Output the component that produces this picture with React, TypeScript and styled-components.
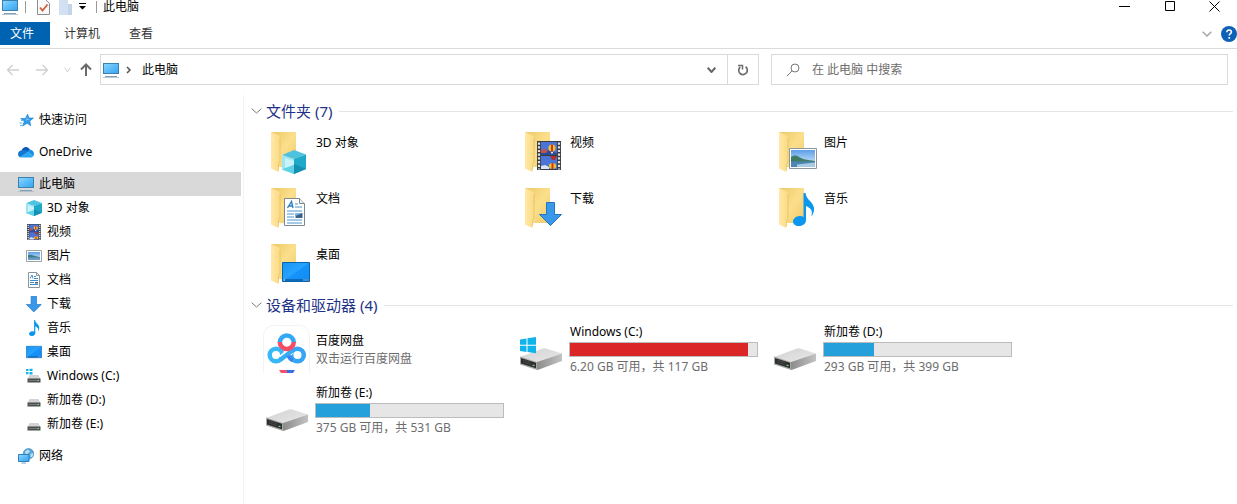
import React from "react";
import styled, { createGlobalStyle } from "styled-components";

const GlobalStyle = createGlobalStyle`
  * { box-sizing: border-box; }
  body {
    margin: 0;
    background: #fff;
    color: #000;
    font: 12px/18px "Noto Sans", "Noto Sans CJK SC", sans-serif;
  }
  button, input { font: inherit; color: inherit; border: 0; background: none; padding: 0; margin: 0; }
  svg { display: block; flex: none; }
`;

const Window = styled.div`
  display: flex;
  flex-direction: column;
  min-height: 100vh;
`;

/* ---------- title bar ---------- */
const TitleBar = styled.header`
  display: flex;
  align-items: center;
  height: 22px;
  padding: 0 0 9px 2px;
`;
const QuickTools = styled.div`
  display: flex;
  align-items: center;
`;
const ToolButton = styled.button<{ $w: number }>`
  display: flex;
  justify-content: center;
  width: ${(p) => p.$w}px;
`;
const Separator = styled.span`
  width: 1px;
  height: 12px;
  margin: 0 6px 0 7px;
  background: #9a9a9a;
`;
const Title = styled.h1`
  flex: 1;
  margin: 0;
  font-size: 12px;
  line-height: 13px;
  font-weight: 400;
`;
const WindowButton = styled.button`
  display: flex;
  justify-content: center;
  width: 45px;
`;

/* ---------- ribbon ---------- */
const Ribbon = styled.nav`
  display: flex;
  align-items: center;
  height: 27px;
  padding-bottom: 3px;
  border-bottom: 1px solid #dadbdc;
`;
const Tab = styled.button<{ $active?: boolean }>`
  height: 23px;
  padding: 0 15px 0 14px;
  ${(p) => (p.$active ? "background: #0063b1; color: #fff; padding: 0 16px 0 10px;" : "color: #333;")}
`;
const RibbonEnd = styled.div`
  display: flex;
  align-items: center;
  gap: 9px;
  margin-left: auto;
`;

/* ---------- address row ---------- */
const AddressRow = styled.div`
  display: flex;
  align-items: center;
  padding: 5px 9px 0 0;
`;
const History = styled.div`
  display: flex;
  align-items: center;
  flex: none;
  width: 100px;
  padding-left: 5px;
`;
const AddressBox = styled.div`
  display: flex;
  align-items: center;
  flex: 659 1 659px;
  min-width: 0;
  height: 31px;
  border: 1px solid #d9d9d9;
  padding-left: 2px;
`;
const Crumb = styled.button`
  padding: 0 3px 0 7px;
`;
const AddressEnd = styled.div`
  display: flex;
  align-self: stretch;
  margin-left: auto;
`;
const AddressButton = styled.button<{ $line?: boolean }>`
  display: flex;
  align-items: center;
  justify-content: center;
  width: 31px;
  ${(p) => p.$line && "border-left: 1px solid #d9d9d9;"}
`;
const SearchBox = styled.label`
  display: flex;
  align-items: center;
  gap: 12px;
  flex: 457 1 457px;
  min-width: 0;
  height: 31px;
  margin-left: 12px;
  padding-left: 14px;
  border: 1px solid #d9d9d9;
`;
const SearchInput = styled.input`
  flex: 1;
  min-width: 0;
  outline: 0;
  &::placeholder { color: #6d6d6d; opacity: 1; }
`;

/* ---------- body ---------- */
const Body = styled.div`
  display: flex;
  flex: 1;
  padding-top: 10px;
`;
const Sidebar = styled.nav`
  display: flex;
  flex-direction: column;
  gap: 8px;
  width: 244px;
  flex: none;
  padding: 13px 2px 0 0;
  border-right: 1px solid #f3f3f3;
`;
const NavGroup = styled.ul`
  margin: 0;
  padding: 0;
  list-style: none;
`;
const NavLink = styled.a<{ $child?: boolean; $selected?: boolean }>`
  display: flex;
  align-items: center;
  gap: 5px;
  height: 24px;
  padding-left: ${(p) => (p.$child ? 26 : 18)}px;
  color: #000;
  text-decoration: none;
  background: ${(p) => (p.$selected ? "#d9d9d9" : "none")};
`;
const Content = styled.main`
  flex: 1;
  min-width: 0;
  padding: 3px 4px 0 7px;
`;
const SectionHeader = styled.h2`
  display: flex;
  align-items: center;
  gap: 4px;
  height: 26px;
  margin: 0;
  font-size: 15px;
  font-weight: 400;
  color: #1e3287;
  &::after {
    content: "";
    flex: 1;
    height: 1px;
    margin-left: 3px;
    background: #e4e4e4;
  }
`;
const Tiles = styled.div<{ $row: number }>`
  display: grid;
  grid-template-columns: repeat(auto-fill, 254px);
  grid-auto-rows: ${(p) => p.$row}px;
  padding-left: 12px;
`;
const FolderTile = styled.a`
  display: flex;
  gap: 5px;
  padding: 5px 0 3px;
  color: inherit;
  text-decoration: none;
`;
const FolderName = styled.span`
  padding-top: 5px;
`;
const DriveTile = styled.a`
  display: flex;
  align-items: center;
  gap: 4px;
  color: inherit;
  text-decoration: none;
`;
const DriveInfo = styled.span`
  display: flex;
  flex-direction: column;
  padding-top: 2px;
`;
const Line = styled.span<{ $muted?: boolean }>`
  padding-left: 1px;
  color: ${(p) => (p.$muted ? "#6d6d6d" : "#000")};
`;
const Usage = styled.progress<{ $full?: boolean }>`
  appearance: none;
  display: block;
  width: 189px;
  height: 15px;
  margin: 1px 0;
  border: 1px solid #bcbcbc;
  background: #e6e6e6;
  &::-webkit-progress-bar { background: #e6e6e6; }
  &::-webkit-progress-value { background: ${(p) => (p.$full ? "#da2626" : "#26a0da")}; }
`;

/* ---------- icons ---------- */
const Gradients = styled.svg`
  position: absolute;
`;
const Defs = () => (
  <Gradients width="0" height="0" aria-hidden="true">
    <defs>
      <linearGradient id="screen" x1="0" y1="0" x2="1" y2="1">
        <stop offset="0" stopColor="#8fd8ff" /><stop offset=".5" stopColor="#5bbcfa" /><stop offset="1" stopColor="#3aa3ee" />
      </linearGradient>
      <linearGradient id="back" x1="0" y1="0" x2="1" y2="1">
        <stop offset="0" stopColor="#edc865" /><stop offset=".5" stopColor="#fbdf8c" /><stop offset="1" stopColor="#f0cb69" />
      </linearGradient>
      <linearGradient id="flap" x1="0" y1="0" x2="1" y2="0">
        <stop offset="0" stopColor="#ffe9a6" /><stop offset="1" stopColor="#fbdb84" />
      </linearGradient>
      <linearGradient id="desk" x1="0" y1="0" x2="1" y2="1">
        <stop offset="0" stopColor="#1595f5" /><stop offset=".48" stopColor="#27a3ff" /><stop offset=".52" stopColor="#1593f8" /><stop offset="1" stopColor="#0f8df2" />
      </linearGradient>
      <linearGradient id="sky" x1="0" y1="0" x2="0" y2="1">
        <stop offset="0" stopColor="#5b9fe8" /><stop offset="1" stopColor="#e4f3fc" />
      </linearGradient>
      <linearGradient id="metal" x1="0" y1="0" x2="1" y2="1">
        <stop offset="0" stopColor="#d2d2d2" /><stop offset="1" stopColor="#e8e8e8" />
      </linearGradient>
      <linearGradient id="side" x1="0" y1="0" x2="1" y2="0">
        <stop offset="0" stopColor="#8c8c8c" /><stop offset="1" stopColor="#c2c2c2" />
      </linearGradient>
    </defs>
  </Gradients>
);

const Small = ({ children }: { children: React.ReactNode }) => (
  <svg width="16" height="16" viewBox="0 0 16 16" fill="none" aria-hidden="true">{children}</svg>
);

const PcIcon = () => (
  <Small>
    <rect x=".5" y="1.5" width="15" height="10" fill="url(#screen)" stroke="#3c80b0" />
    <path d="M2 14.5h12" stroke="#7fa0b8" /><path d="M0 15.5h16" stroke="#a9bac7" strokeWidth=".8" />
  </Small>
);
const StarIcon = () => (
  <Small>
    <path d="M9.600 2.200l1.400 3.800 4.500.1-3.700 2.800.9 4.900-3.500-2.500-4.600 2.800 1.700-4.600L2.600 6.500h4.700z" fill="#2f9be9" stroke="#1a7fcd" strokeWidth=".6" />
    <path d="M9 5l.8 2 2.200.3-4 1.500z" fill="#7cc9fb" />
    <path d="M3 8.500h2.500M1.500 11h3M2 13.500h2" stroke="#5db4f0" />
  </Small>
);
const CloudIcon = () => (
  <Small>
    <path d="M3.500 6.500C4.500 3.800 7 2.500 9.200 3.200c1.400.4 2.300 1.300 2.800 2.500L8 9z" fill="#0a5cb8" />
    <path d="M3.700 6.200C1.500 6.400 0 8 0 10c0 1.500.8 2.700 2 3.200L10.500 8 8 6.500c-1.200-.6-2.800-.7-4.300-.3z" fill="#1277d2" />
    <path d="M9.500 7.700c.7-1.300 1.500-2 2.700-2 2 0 3.800 1.800 3.800 4 0 1-.3 1.800-.8 2.500z" fill="#1b8fe4" />
    <path d="M2 13.200l7.500-5.500 5.700 4.500c-.6.8-1.500 1.300-2.500 1.300H3.500c-.5 0-1-.1-1.500-.3z" fill="#2aa5f0" />
  </Small>
);
const CubeShape = () => (
  <>
    <path d="M12 0L24 4.500 12 9 0 5z" fill="#4fc3dd" /><path d="M0 5l12 4v15L0 19.500z" fill="#9be6f2" />
    <path d="M24 4.500L12 9v15l12-5z" fill="#1fa9c9" /><path d="M0 19.500L12 14v10z" fill="#5fd2e6" /><path d="M12 14l12 5-12 5z" fill="#158fb2" />
    <path d="M3 8l9 3v4l-9 3z" fill="#e0fafd" opacity=".65" />
  </>
);
const CubeIcon = () => <Small><g transform="scale(.667)"><CubeShape /></g></Small>;
const FilmShape = () => (
  <>
    <path d="M0 0h24v29H0z" fill="#3a3c3f" />
    <path d="M4 1h16v13H4zM4 15h16v13H4z" fill="#4a74d8" />
    <path d="M4 10l6-1 10 3v2H4z" fill="#27499e" /><path d="M4 9l4-1 3 2-2 2H4z" fill="#c1544a" />
    <ellipse cx="15" cy="7" rx="3.600" ry="3.500" fill="#f1c02b" /><path d="M14 3.500h2v7h-2z" fill="#c93a26" /><path d="M14 11h2v1.500h-2z" fill="#f7e3a8" />
    <path d="M13 15h7l-2 4h-3z" fill="#a83434" /><ellipse cx="15.500" cy="25" rx="3.600" ry="3" fill="#f1c02b" /><path d="M14.500 22h2v6h-2z" fill="#c93a26" />
    <path d="M4 25l4-1 4 2v2H4z" fill="#d8e3f5" />
    <path d="M2 1.500v27M22 1.500v27" stroke="#e4e4e4" strokeWidth="2.200" strokeDasharray="2.200 1.500" />
  </>
);
const FilmIcon = () => <Small><g transform="translate(1 0) scale(.58 .55)"><FilmShape /></g></Small>;
const PhotoShape = () => (
  <>
    <path d="M.5.5h27v20H.5z" fill="#fff" stroke="#8e969c" /><path d="M2 2h24v17H2z" fill="url(#sky)" />
    <path d="M2 9c3-2 5-2 8 0s8 3 16 4v1H2z" fill="#3f7c66" /><path d="M2 13.500h24V19H2z" fill="#4d86b4" /><path d="M8 16.500l18-2V19H8z" fill="#a8cae2" />
  </>
);
const PhotoIcon = () => (
  <Small>
    <path d="M.5 2.500h15v11H.5z" fill="#fff" stroke="#9aa3a9" /><path d="M2 4h12v8H2z" fill="url(#sky)" />
    <path d="M2 7c3-1 5 1 12 2v1H2z" fill="#3f7c86" /><path d="M2 9.500h12V12H2z" fill="#6b9cc6" />
  </Small>
);
const DocShape = () => (
  <>
    <path d="M.5.5h15l5 5v22H.5z" fill="#fff" stroke="#7c8890" /><path d="M15.500.5v5h5" fill="#e8edf0" stroke="#7c8890" />
    <path d="M3.500 10L7.500 3.500l1.500 6.500M5 8h4" stroke="#2f7fc0" strokeWidth="1.400" />
    <path d="M11 6h3M11 9h7M3 13h15M3 16h7M3 19h7M3 22h15M3 25h15" stroke="#4b94cf" />
    <path d="M11.500 15h7v5h-7z" fill="#3a628c" /><path d="M11.500 15h7l-7 3z" fill="#82b4dc" />
  </>
);
const DocIcon = () => (
  <Small>
    <path d="M2.500.5h8l3 3v12h-11z" fill="#fff" stroke="#8a959c" /><path d="M10.500.5v3h3" stroke="#8a959c" />
    <path d="M4 6.500L6 3l1 3.500M8 4.500h2M8 6.500h4M4 8.500h8M4 10.500h4M4 12.500h8" stroke="#3f8fce" /><path d="M9 10h3v1.500H9z" fill="#3a628c" />
  </Small>
);
const ArrowShape = () => <path d="M7.500.5h8v12h7L11.500 23.500.5 12.500h7z" fill="#3a98ea" stroke="#2377bd" />;
const ArrowIcon = () => <Small><g transform="scale(.68)"><ArrowShape /></g></Small>;
const NoteShape = () => (
  <path d="M10.500 0h2c.5 4 2.500 6 5 8.500 3.500 4 5 7.500 2 13.500l-1.200 1.500c1.500-5 .5-8-5.300-10.500v14c0 3.500-3 6-7 6S0 31 0 28.500 3 23 6.500 23c1.500 0 3 .3 4 1z" fill="#0c97ee" />
);
const NoteIcon = () => <Small><g transform="translate(3) scale(.485)"><NoteShape /></g></Small>;
const DesktopShape = () => (
  <>
    <path d="M.5.5h27v19H.5z" fill="url(#desk)" stroke="#0a63ad" /><path d="M1 18h26" stroke="#0b5ea8" strokeWidth="1.500" />
    <path d="M1.500 18h1.500M21.500 18h1M23.500 18h1M25.500 18h1" stroke="#fff" />
  </>
);
const DesktopIcon = () => <Small><g transform="translate(0 2) scale(.571 .6)"><DesktopShape /></g></Small>;
const DriveIcon = ({ win }: { win?: boolean }) => (
  <Small>
    <path d="M3.500 7h9l2 4H1.500z" fill="#d3d3d3" /><path d="M1.500 10.500h13v4h-13z" fill="#4b4d4e" />
    <path d="M2.500 12.500h9" stroke="#727576" /><path d="M11.500 12.500h1.500" stroke="#80e090" />
    {win && <path d="M0 0h7v7H0z" fill="#fff" />}
    {win && <path d="M0 1h2.500v2H0zM3.500.8h3V3h-3zM0 4h2.500v2.200H0zM3.500 4h3v2.500h-3z" fill="#13b5ea" />}
  </Small>
);
const NetworkIcon = () => (
  <Small>
    <circle cx="10.500" cy="5.800" r="5.300" fill="#58a7d8" stroke="#3c83b4" strokeWidth=".6" />
    <path d="M7 3.500l3-2 2 2-2 2-2.500 1zM12.500 6l2-1 .8 2-1.500 2.500-1.500-1z" fill="#b7dfee" />
    <path d="M.5 6.500h10.500v7H.5z" fill="url(#screen)" stroke="#2f7fc0" /><path d="M3.500 15h4.500" stroke="#7fa0b8" />
  </Small>
);

const Large = ({ children }: { children: React.ReactNode }) => (
  <svg width="48" height="48" viewBox="0 0 48 48" fill="none" aria-hidden="true">{children}</svg>
);
const Folder = ({ x, y, children }: { x: number; y: number; children: React.ReactNode }) => (
  <Large>
    <path d="M8 3h25v35H16z" fill="url(#back)" />
    <path d="M8 3l8 3.500c.7.300 1 .8 1 1.500v24l-1.500 2v9L8 39.500z" fill="url(#flap)" />
    <path d="M17 9v24l-1.500 2v6" stroke="#e3bd61" strokeWidth=".7" />
    <g transform={`translate(${x} ${y})`}>{children}</g>
  </Large>
);
const DriveLarge = ({ win }: { win?: boolean }) => (
  <Large>
    <path d="M3 32L26 23.500q1.500-.5 3 0l16 5-25 8.500z" fill="url(#metal)" />
    <path d="M20 37L45 28.500V36L22 44.500l-2 .5z" fill="url(#side)" />
    <path d="M3 31.500L20 37v8L3 39.500z" fill="#a9a9a9" /><path d="M4 33l15 4.700v5.600L4 38.500z" fill="#2c2f2e" />
    <path d="M6 35l8 2.500M6 37l8 2.500" stroke="#4d5250" strokeWidth=".7" /><path d="M15.500 40l2 .7" stroke="#7ae083" strokeWidth="1.200" />
    {win && <path d="M3 14.500l6.500-1v6.200H3zM10.500 13.300L19 12v7.700h-8.500zM3 20.700h6.500v6.200l-6.500-1zM10.500 20.700H19v7.600l-8.500-1.200z" fill="#10b4ea" />}
  </Large>
);
const BaiduIcon = () => (
  <Large>
    <path d="M.5 48V10.500a10 10 0 0 1 10-10h26a10 10 0 0 1 10 10V48" fill="#fff" stroke="#f3f3f5" />
    <g strokeWidth="4.500">
      <circle cx="13" cy="30" r="6.300" stroke="#38b8f6" />
      <circle cx="34.500" cy="30" r="6.300" stroke="#35a5f5" />
      <path d="M18.500 33.500L28.500 25.500" stroke="#fff" strokeWidth="7" />
      <path d="M17 35L29.500 25.500" stroke="#36aef5" />
      <path d="M25.500 30.500q1 3.500 4.500 5" stroke="#3a86f0" strokeWidth="4" />
      <path d="M16.800 17.500a7 7 0 0 1 14 0" stroke="#32a9f3" />
      <path d="M16.800 17a7 7 0 0 0 14 0" stroke="#f24e68" />
    </g>
    <path d="M16 45h8v3h-6z" fill="#f0506c" /><path d="M24 45h8l-2 3h-6z" fill="#3370e8" />
  </Large>
);

const Chevron = ({ w = 10, color = "#777", bold = 1 }: { w?: number; color?: string; bold?: number }) => (
  <svg width={w} height="6" viewBox={`0 0 ${w} 6`} fill="none" aria-hidden="true">
    <path d={`M.7.7L${w / 2} 5l${w / 2 - 0.7}-4.300`} stroke={color} strokeWidth={bold} />
  </svg>
);
const Arrow = ({ dir, color }: { dir: "left" | "right" | "up"; color: string }) => (
  <svg width="14" height="14" viewBox="0 0 14 14" fill="none" aria-hidden="true">
    <g transform={`rotate(${{ left: 0, right: 180, up: 90 }[dir]} 7 7)`}>
      <path d="M13 7H1.500M6.500 2l-5 5 5 5" stroke={color} strokeWidth={dir === "up" ? 2 : 1.3} />
    </g>
  </svg>
);

/* ---------- data ---------- */
type NavItem = { label: string; icon: React.ReactNode; child?: boolean; selected?: boolean };
const navGroups: NavItem[][] = [
  [{ label: "快速访问", icon: <StarIcon /> }],
  [{ label: "OneDrive", icon: <CloudIcon /> }],
  [
    { label: "此电脑", icon: <PcIcon />, selected: true },
    { label: "3D 对象", icon: <CubeIcon />, child: true },
    { label: "视频", icon: <FilmIcon />, child: true },
    { label: "图片", icon: <PhotoIcon />, child: true },
    { label: "文档", icon: <DocIcon />, child: true },
    { label: "下载", icon: <ArrowIcon />, child: true },
    { label: "音乐", icon: <NoteIcon />, child: true },
    { label: "桌面", icon: <DesktopIcon />, child: true },
    { label: "Windows (C:)", icon: <DriveIcon win />, child: true },
    { label: "新加卷 (D:)", icon: <DriveIcon />, child: true },
    { label: "新加卷 (E:)", icon: <DriveIcon />, child: true },
  ],
  [{ label: "网络", icon: <NetworkIcon /> }],
];
const folders = [
  { name: "3D 对象", icon: <Folder x={19} y={21}><CubeShape /></Folder> },
  { name: "视频", icon: <Folder x={20} y={12}><FilmShape /></Folder> },
  { name: "图片", icon: <Folder x={18} y={19}><PhotoShape /></Folder> },
  { name: "文档", icon: <Folder x={21} y={13}><DocShape /></Folder> },
  { name: "下载", icon: <Folder x={22} y={17}><ArrowShape /></Folder> },
  { name: "音乐", icon: <Folder x={22} y={8}><NoteShape /></Folder> },
  { name: "桌面", icon: <Folder x={19} y={21}><DesktopShape /></Folder> },
];
const drives = [
  { name: "百度网盘", note: "双击运行百度网盘", icon: <BaiduIcon /> },
  { name: "Windows (C:)", note: "6.20 GB 可用，共 117 GB", used: 95, full: true, icon: <DriveLarge win /> },
  { name: "新加卷 (D:)", note: "293 GB 可用，共 399 GB", used: 27, icon: <DriveLarge /> },
  { name: "新加卷 (E:)", note: "375 GB 可用，共 531 GB", used: 29, icon: <DriveLarge /> },
];

export default function App() {
  return (
    <Window>
      <GlobalStyle />
      <Defs />
      <TitleBar>
        <QuickTools>
          <PcIcon />
          <Separator />
          <ToolButton $w={22} aria-label="属性">
            <svg width="13" height="16" viewBox="0 0 13 16" fill="none">
              <path d="M.5.5h8l4 4v11H.5z" fill="#fafafa" stroke="#8d8d8d" /><path d="M3 8.500l2.500 3 5-6" stroke="#d4603a" strokeWidth="1.800" />
            </svg>
          </ToolButton>
          <ToolButton $w={22} aria-label="新建文件夹">
            <svg width="13" height="16" viewBox="0 0 13 16" fill="none">
              <path d="M0 0h9v5h4v11H0z" fill="#d3e0f2" /><path d="M9 5h4v11H9z" fill="#c4d4ea" />
            </svg>
          </ToolButton>
          <ToolButton $w={13} aria-label="自定义快速访问工具栏">
            <svg width="7" height="7" viewBox="0 0 7 7"><path d="M0 0h7v1H0zM0 3h7L3.500 6.500z" /></svg>
          </ToolButton>
          <Separator />
        </QuickTools>
        <Title>此电脑</Title>
        <WindowButton aria-label="最小化">
          <svg width="11" height="11" viewBox="0 0 11 11"><path d="M0 5h11v1H0z" /></svg>
        </WindowButton>
        <WindowButton aria-label="最大化">
          <svg width="11" height="11" viewBox="0 0 11 11"><path d="M1.500.5h9v9h-9z" fill="none" stroke="#000" /></svg>
        </WindowButton>
        <WindowButton aria-label="关闭">
          <svg width="11" height="11" viewBox="0 0 11 11"><path d="M.5.5l10 10M10.500.5l-10 10" stroke="#000" /></svg>
        </WindowButton>
      </TitleBar>

      <Ribbon>
        <Tab $active>文件</Tab>
        <Tab>计算机</Tab>
        <Tab>查看</Tab>
        <RibbonEnd>
          <button aria-label="展开功能区"><Chevron color="#a8a8a8" bold={1.5} /></button>
          <button aria-label="帮助">
            <svg width="16" height="16" viewBox="0 0 16 16" fill="none">
              <circle cx="8" cy="8" r="8" fill="#0d62b8" />
              <path d="M5.800 6.200c0-1.500 1-2.200 2.300-2.200s2.300.8 2.300 2c0 1.600-2.200 1.700-2.200 3.500" stroke="#fff" strokeWidth="1.600" /><path d="M7.400 11h1.700v1.700H7.400z" fill="#fff" />
            </svg>
          </button>
        </RibbonEnd>
      </Ribbon>

      <AddressRow>
        <History>
          <ToolButton $w={16} aria-label="后退"><Arrow dir="left" color="#cfcfcf" /></ToolButton>
          <ToolButton $w={42} aria-label="前进"><Arrow dir="right" color="#cfcfcf" /></ToolButton>
          <ToolButton $w={8} aria-label="最近位置"><Chevron w={7} color="#cfcfcf" /></ToolButton>
          <ToolButton $w={29} aria-label="上移"><Arrow dir="up" color="#6b6b6b" /></ToolButton>
        </History>
        <AddressBox>
          <PcIcon />
          <Crumb aria-label="展开">
            <svg width="6" height="8" viewBox="0 0 6 8" fill="none"><path d="M1 1l3 3-3 3" stroke="#555" strokeWidth="1.500" /></svg>
          </Crumb>
          <Crumb>此电脑</Crumb>
          <AddressEnd>
            <AddressButton aria-label="以前的位置"><Chevron w={9} color="#666" bold={2} /></AddressButton>
            <AddressButton $line aria-label="刷新">
              <svg width="12" height="12" viewBox="0 0 12 12" fill="none">
                <path d="M3.200 3a4.300 4.300 0 1 0 5.400-.2" stroke="#6d6d6d" strokeWidth="1.700" /><path d="M1 1.500h4.500v4" stroke="#6d6d6d" strokeWidth="1.500" />
              </svg>
            </AddressButton>
          </AddressEnd>
        </AddressBox>
        <SearchBox>
          <svg width="14" height="14" viewBox="0 0 14 14" fill="none" aria-hidden="true">
            <circle cx="9" cy="5" r="4" stroke="#777" /><path d="M6.200 7.800L1 13" stroke="#777" />
          </svg>
          <SearchInput type="text" placeholder="在 此电脑 中搜索" aria-label="搜索" />
        </SearchBox>
      </AddressRow>

      <Body>
        <Sidebar>
          {navGroups.map((group) => (
            <NavGroup key={group[0].label}>
              {group.map((item) => (
                <li key={item.label}>
                  <NavLink href="#" $child={item.child} $selected={item.selected}>
                    {item.icon}
                    {item.label}
                  </NavLink>
                </li>
              ))}
            </NavGroup>
          ))}
        </Sidebar>
        <Content>
          <SectionHeader><Chevron w={11} />文件夹 (7)</SectionHeader>
          <Tiles $row={56}>
            {folders.map((f) => (
              <FolderTile href="#" key={f.name}>
                {f.icon}
                <FolderName>{f.name}</FolderName>
              </FolderTile>
            ))}
          </Tiles>
          <SectionHeader><Chevron w={11} />设备和驱动器 (4)</SectionHeader>
          <Tiles $row={61}>
            {drives.map((d) => (
              <DriveTile href="#" key={d.name}>
                {d.icon}
                <DriveInfo>
                  <Line>{d.name}</Line>
                  {d.used !== undefined && <Usage $full={d.full} max={100} value={d.used} aria-label={d.name} />}
                  <Line $muted>{d.note}</Line>
                </DriveInfo>
              </DriveTile>
            ))}
          </Tiles>
        </Content>
      </Body>
    </Window>
  );
}
